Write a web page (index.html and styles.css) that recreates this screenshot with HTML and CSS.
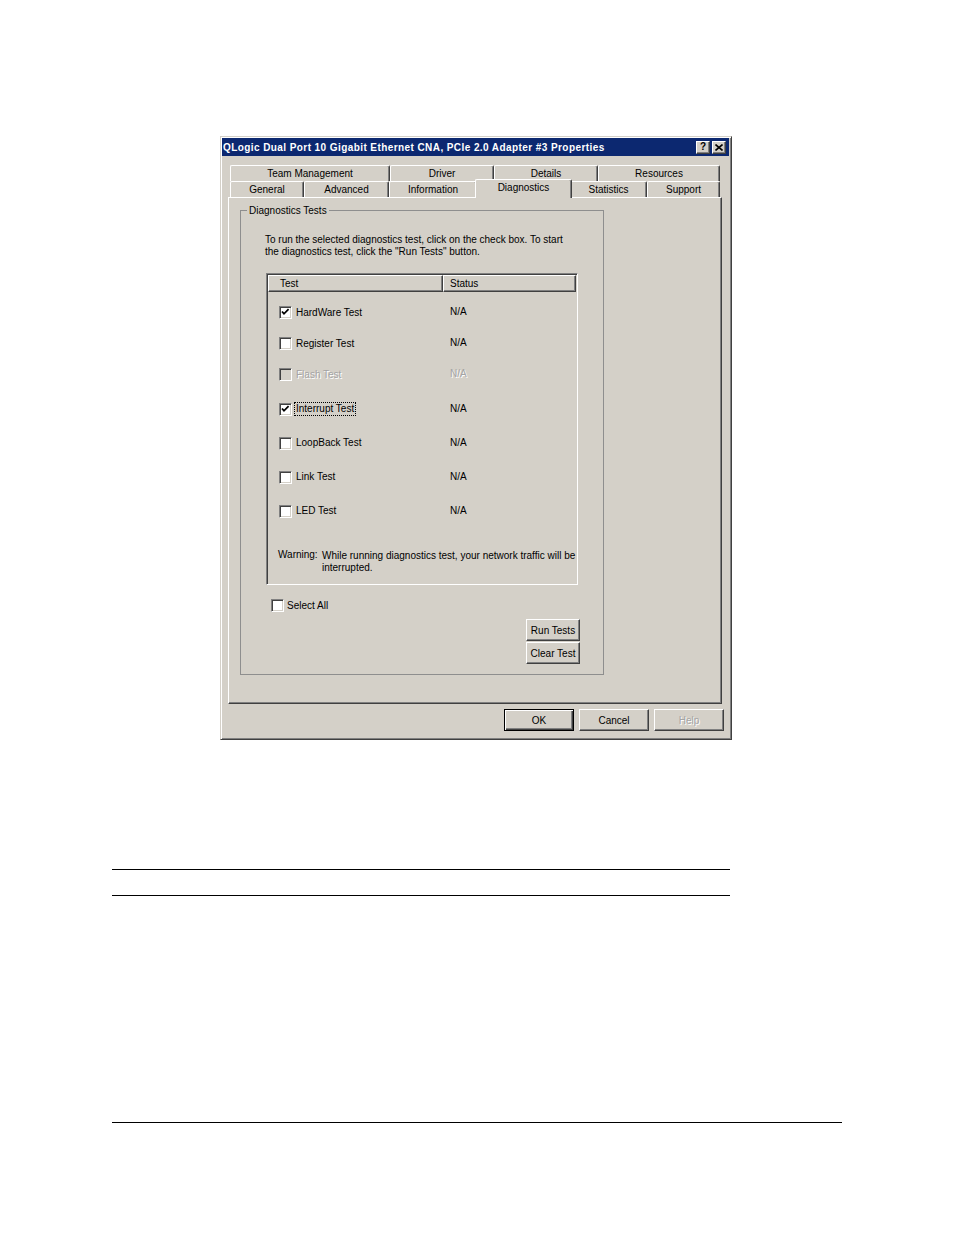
FILE: index.html
```html
<!DOCTYPE html>
<html>
<head>
<meta charset="utf-8">
<title>Properties</title>
<link rel="stylesheet" href="styles.css">
</head>
<body>
<div class="page">
  <div class="dialog">
    <div class="titlebar">
      <span class="title">QLogic Dual Port 10 Gigabit Ethernet CNA, PCIe 2.0 Adapter #3 Properties</span>
      <span class="tbtns">
        <span class="tbtn">?</span>
        <span class="tbtn">
          <svg width="8" height="7" viewBox="0 0 8 7"><path d="M0.5 0.5 L7.5 6.5 M7.5 0.5 L0.5 6.5" stroke="#000" stroke-width="1.6" fill="none"/></svg>
        </span>
      </span>
    </div>
    <div class="sheet">
      <div class="tabs">
        <div class="tabrow">
          <div class="tab w160">Team Management</div>
          <div class="tab w104">Driver</div>
          <div class="tab w104">Details</div>
          <div class="tab w122">Resources</div>
        </div>
        <div class="tabrow">
          <div class="tab w74">General</div>
          <div class="tab w85">Advanced</div>
          <div class="tab w88">Information</div>
          <div class="tab w97 active">Diagnostics</div>
          <div class="tab w77">Statistics</div>
          <div class="tab w73">Support</div>
        </div>
      </div>
      <div class="panel">
        <fieldset class="group">
          <legend class="legend">Diagnostics Tests</legend>
          <p class="desc">To run the selected diagnostics test, click on the check box. To start<br>the diagnostics test, click the "Run Tests" button.</p>
          <div class="list">
            <div class="lhead">
              <div class="hcell h1">Test</div>
              <div class="hcell h2">Status</div>
            </div>
            <div class="rows">
              <div class="row">
                <div class="c1"><span class="cb"><svg class="chk" width="13" height="13" viewBox="0 0 13 13"><path d="M3 5.5 L5 7.8 L9.6 3.2" stroke="#000" stroke-width="1.8" fill="none"/></svg></span><span class="lbl">HardWare Test</span></div>
                <div class="c2">N/A</div>
              </div>
              <div class="row">
                <div class="c1"><span class="cb"></span><span class="lbl">Register Test</span></div>
                <div class="c2">N/A</div>
              </div>
              <div class="row disabled">
                <div class="c1"><span class="cb"></span><span class="lbl">Flash Test</span></div>
                <div class="c2">N/A</div>
              </div>
              <div class="row tall first-tall">
                <div class="c1"><span class="cb"><svg class="chk" width="13" height="13" viewBox="0 0 13 13"><path d="M3 5.5 L5 7.8 L9.6 3.2" stroke="#000" stroke-width="1.8" fill="none"/></svg></span><span class="lbl focus">Interrupt Test</span></div>
                <div class="c2">N/A</div>
              </div>
              <div class="row tall">
                <div class="c1"><span class="cb"></span><span class="lbl">LoopBack Test</span></div>
                <div class="c2">N/A</div>
              </div>
              <div class="row tall">
                <div class="c1"><span class="cb"></span><span class="lbl">Link Test</span></div>
                <div class="c2">N/A</div>
              </div>
              <div class="row tall">
                <div class="c1"><span class="cb"></span><span class="lbl">LED Test</span></div>
                <div class="c2">N/A</div>
              </div>
            </div>
            <div class="warning">
              <span class="wlabel">Warning:</span>
              <span class="wtext">While running diagnostics test, your network traffic will be interrupted.</span>
            </div>
          </div>
          <div class="selectall"><span class="cb"></span><span class="lbl">Select All</span></div>
          <div class="actions">
            <div class="btn small">Run Tests</div>
            <div class="btn small">Clear Test</div>
          </div>
        </fieldset>
      </div>
    </div>
    <div class="footer">
      <div class="btn big default">OK</div>
      <div class="btn big">Cancel</div>
      <div class="btn big disabledbtn">Help</div>
    </div>
  </div>
  <div class="rule r1"></div>
  <div class="rule r2"></div>
  <div class="rule r3"></div>
</div>
</body>
</html>
```
FILE: styles.css
```css
html, body {
  margin: 0;
  padding: 0;
  background: #fff;
}
body {
  font-family: "Liberation Sans", Arial, sans-serif;
  font-size: 10px;
  color: #000;
}
.page {
  padding-top: 136px;
  padding-left: 220px;
  height: 1235px;
  box-sizing: border-box;
}
.dialog {
  width: 512px;
  height: 604px;
  box-sizing: border-box;
  background: #d4d0c8;
  border: 1px solid;
  border-color: #d4d0c8 #404040 #404040 #d4d0c8;
  box-shadow: inset 1px 1px 0 #fff, inset -1px -1px 0 #808080;
  padding: 1px;
  display: flex;
  flex-direction: column;
}
.titlebar {
  height: 18px;
  background: #0c2870;
  display: flex;
  align-items: center;
  justify-content: space-between;
  padding: 0 3px 0 1px;
  margin-right: 1px;
}
.title {
  color: #fff;
  font-weight: bold;
  font-size: 10px;
  letter-spacing: 0.42px;
  white-space: nowrap;
}
.tbtns {
  display: flex;
  gap: 2px;
}
.tbtn {
  width: 14px;
  height: 13px;
  box-sizing: border-box;
  background: #d4d0c8;
  border: 1px solid;
  border-color: #fff #404040 #404040 #fff;
  box-shadow: inset -1px -1px 0 #808080;
  display: flex;
  align-items: center;
  justify-content: center;
  font-weight: bold;
  font-size: 10px;
  line-height: 1;
  color: #000;
}
.sheet {
  margin-top: 9px;
  margin-left: 6px;
  width: 494px;
}
.tabs {
  padding: 0 2px;
}
.tabrow {
  display: flex;
  height: 16px;
}
.tab {
  flex: none;
  height: 16px;
  box-sizing: border-box;
  border-top: 1px solid #fff;
  border-left: 1px solid #fff;
  border-right: 1px solid #404040;
  box-shadow: inset -1px 0 0 #808080;
  border-radius: 2px 2px 0 0;
  text-align: center;
  line-height: 15px;
  background: #d4d0c8;
  white-space: nowrap;
}
.tab.active {
  height: 19px;
  margin: -2px -2px -1px -2px;
  position: relative;
  z-index: 1;
  line-height: 15px;
}
.w160 { width: 160px; }
.w104 { width: 104px; }
.w122 { width: 122px; }
.w74 { width: 74px; }
.w85 { width: 85px; }
.w88 { width: 88px; }
.w97 { width: 97px; }
.w77 { width: 77px; }
.w73 { width: 73px; }
.panel {
  height: 507px;
  box-sizing: border-box;
  border: 1px solid;
  border-color: #fff #404040 #404040 #fff;
  box-shadow: inset -1px -1px 0 #808080;
  padding: 6px 0 0 11px;
}
.group {
  margin: 0;
  padding: 0;
  width: 364px;
  height: 471px;
  box-sizing: border-box;
  border: 1px solid #8e8e8e;
  min-width: 0;
}
.legend {
  margin-left: 6px;
  padding: 0 2px;
  line-height: 13px;
  height: 13px;
}
.desc {
  margin: 17px 0 0 24px;
  line-height: 12px;
  white-space: nowrap;
}
.list {
  margin: 15px 0 0 25px;
  width: 312px;
  height: 312px;
  box-sizing: border-box;
  border: 1px solid;
  border-color: #808080 #fff #fff #808080;
  box-shadow: inset 1px 1px 0 #404040, inset -1px -1px 0 #d4d0c8;
  padding: 1px;
}
.lhead {
  display: flex;
  height: 17px;
}
.hcell {
  height: 17px;
  box-sizing: border-box;
  border: 1px solid;
  border-color: #fff #404040 #404040 #fff;
  box-shadow: inset -1px -1px 0 #808080;
  line-height: 15px;
}
.h1 {
  width: 175px;
  padding-left: 11px;
}
.h2 {
  flex: 1;
  padding-left: 6px;
}
.rows {
  padding-top: 5px;
}
.row {
  display: flex;
  align-items: center;
  height: 31px;
}
.row.tall {
  height: 34px;
}
.row.first-tall {
  margin-top: 2px;
}
.c1 {
  width: 182px;
  box-sizing: border-box;
  padding-left: 11px;
  display: flex;
  align-items: center;
}
.c2 {
  margin-top: -2px;
}
.cb {
  flex: none;
  width: 13px;
  height: 13px;
  box-sizing: border-box;
  background: #fff;
  border: 1px solid;
  border-color: #808080 #fff #fff #808080;
  box-shadow: inset 1px 1px 0 #404040, inset -1px -1px 0 #d4d0c8;
  display: block;
}
.chk {
  display: block;
  margin: -1px;
}
.lbl {
  margin-left: 4px;
  line-height: 12px;
  white-space: nowrap;
}
.lbl.focus {
  outline: 1px dotted #000;
  outline-offset: 0;
  margin-left: 3px;
  padding: 0 1px;
}
.row.disabled .cb {
  background: #d4d0c8;
}
.row.disabled .lbl,
.row.disabled .c2 {
  color: #a4a4a4;
  text-shadow: 1px 1px 0 #fff;
}
.warning {
  margin-top: 22px;
  padding-left: 10px;
  display: flex;
  line-height: 12px;
}
.wlabel {
  width: 44px;
  flex: none;
  margin-top: -1px;
}
.wtext {
  width: 254px;
}
.selectall {
  margin: 14px 0 0 30px;
  display: flex;
  align-items: center;
}
.selectall .lbl {
  margin-left: 3px;
}
.actions {
  margin: 7px 0 0 285px;
  display: flex;
  flex-direction: column;
  gap: 1px;
}
.btn {
  box-sizing: border-box;
  background: #d4d0c8;
  border: 1px solid;
  border-color: #fff #404040 #404040 #fff;
  box-shadow: inset -1px -1px 0 #808080;
  display: flex;
  align-items: center;
  justify-content: center;
  white-space: nowrap;
}
.btn.small {
  width: 54px;
  height: 22px;
}
.footer {
  margin-top: 5px;
  padding-right: 6px;
  display: flex;
  justify-content: flex-end;
  gap: 5px;
}
.btn.big {
  width: 70px;
  height: 22px;
}
.btn.default {
  border-color: #000;
  box-shadow: inset 1px 1px 0 #fff, inset -1px -1px 0 #404040, inset -2px -2px 0 #808080;
}
.btn.disabledbtn {
  color: #a4a4a4;
  text-shadow: 1px 1px 0 #fff;
}
.rule {
  height: 1px;
  background: #000;
  margin-left: -108px;
}
.r1 {
  margin-top: 129px;
  width: 618px;
}
.r2 {
  margin-top: 25px;
  width: 618px;
}
.r3 {
  margin-top: 226px;
  width: 730px;
}
```
